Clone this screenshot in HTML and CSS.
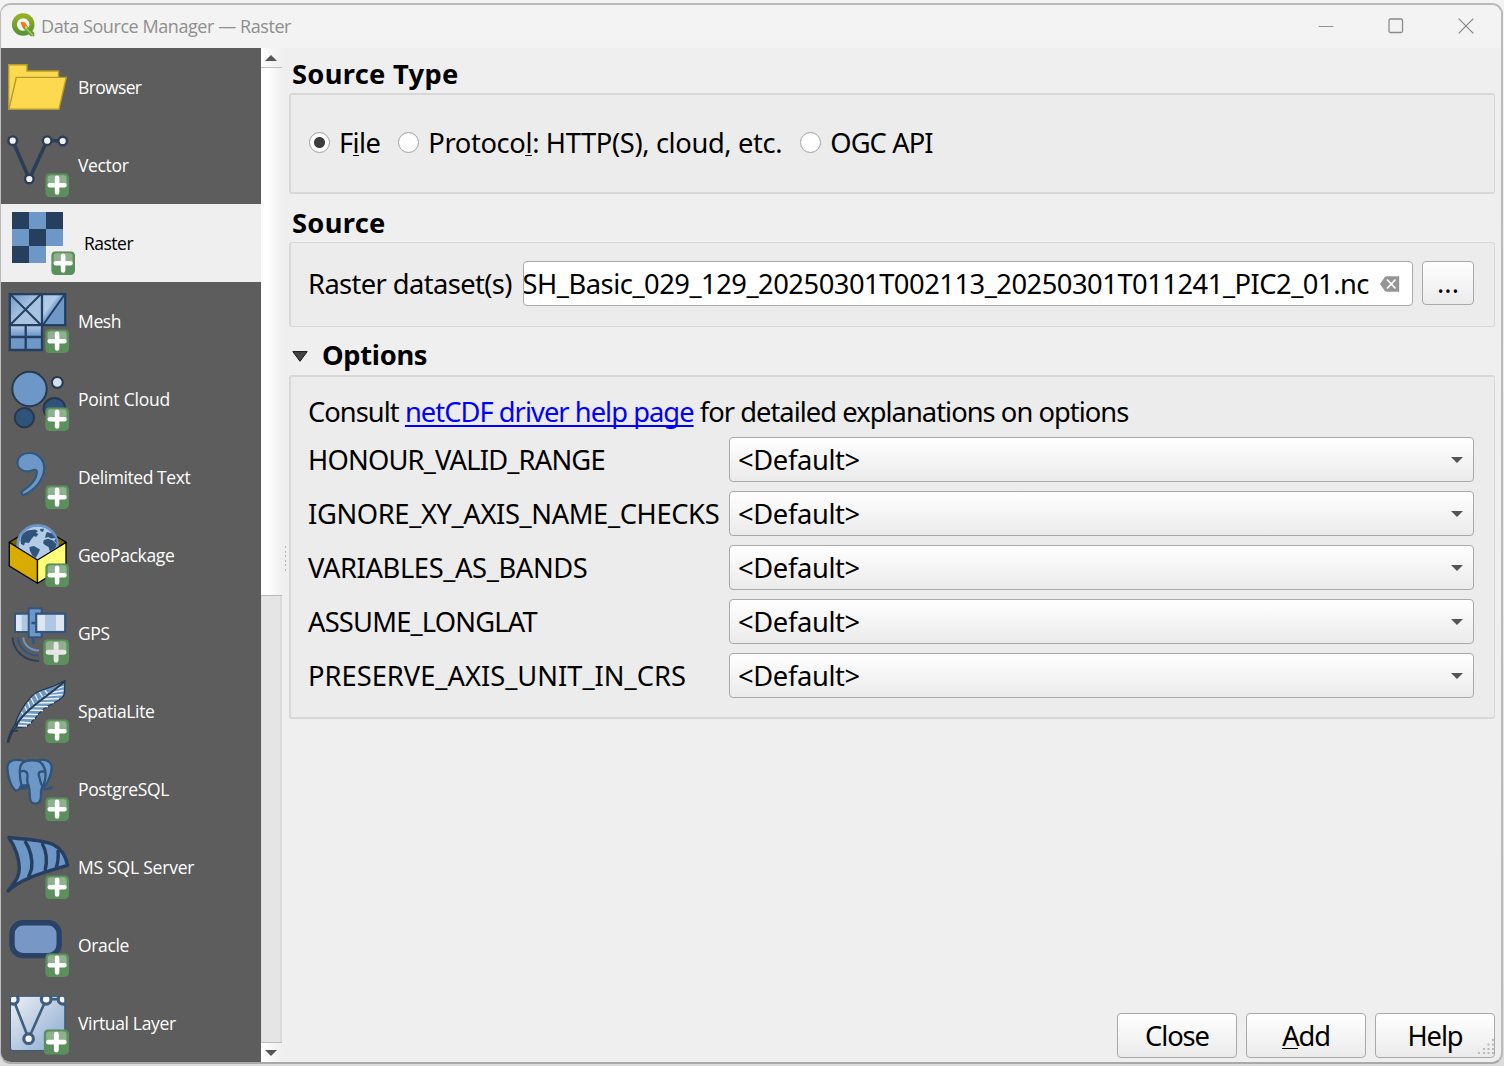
FILE: index.html
```html
<!DOCTYPE html>
<html lang="en">
<head>
<meta charset="utf-8">
<title>Data Source Manager — Raster</title>
<link rel="stylesheet" href="styles.css">
</head>
<body>
<svg class="defs" width="0" height="0" aria-hidden="true">
  <defs>
    <linearGradient id="mesh-a" x1="0" y1="0" x2="1" y2="1"><stop offset="0" stop-color="#6d97c6"/><stop offset=".5" stop-color="#a9c4e2"/><stop offset="1" stop-color="#a9c4e2"/></linearGradient>
    <linearGradient id="mesh-b" x1="0" y1="0" x2="1" y2="1"><stop offset="0" stop-color="#a9c8ec"/><stop offset=".35" stop-color="#b3cce8"/><stop offset=".5" stop-color="#6f98c8"/></linearGradient>
    <linearGradient id="mesh-c" x1="0" y1="0" x2="0" y2="1"><stop offset="0" stop-color="#b3cbe8"/><stop offset=".9" stop-color="#6f98c8"/></linearGradient>
    <linearGradient id="virt" x1="0" y1="0" x2="1" y2="1"><stop offset="0" stop-color="#eef0f4"/><stop offset="1" stop-color="#86a8d0"/></linearGradient>
    <linearGradient id="q" x1="0" y1="0" x2="0" y2="1"><stop offset="0" stop-color="#93b023"/><stop offset="1" stop-color="#589632"/></linearGradient>
    <clipPath id="virt-clip"><rect x="10.5" y="12.3" width="54.3" height="54.3" rx="2.5"/></clipPath>
    <symbol id="plus" viewBox="0 0 24 24">
      <rect width="24" height="24" rx="4.5" fill="#5b8f5b"/>
      <path d="M2.4 13V5A3 3 0 0 1 5.400 2H18.600A3 3 0 0 1 21.600 5V13Z" fill="#8fb18f"/>
      <path d="M12 4.700V19.500M4.600 12.100H19.400" stroke="currentColor" stroke-width="4.600" stroke-linecap="round"/>
    </symbol>
  </defs>
</svg>
<div class="window">
  <header class="titlebar">
    <svg class="logo" width="26" height="24" viewBox="0 0 26 24">
      <circle cx="12.200" cy="11.500" r="8.800" fill="none" stroke="url(#q)" stroke-width="5"/>
      <path d="M14.500 11.500L23.300 19.800V23.200H19.600L11.500 14.500Z" fill="#6aa038"/>
      <path d="M14 14.300L22 22.500" stroke="#a4c95c" stroke-width="1.300"/>
      <path d="M9.500 8.800L14.300 9.500L16.500 14L11.300 14.300Z" fill="#ee7913"/>
      <path d="M14 12.200L17 14.700L14.500 15.500Z" fill="#f3cf45"/>
    </svg>
    <h1 class="title">Data Source Manager — Raster</h1>
    <div class="controls">
      <svg width="16" height="18" viewBox="0 0 16 18"><path d="M.5 9.500H15.500" stroke="#929292"/></svg>
      <svg width="16" height="18" viewBox="0 0 16 18"><rect x="1" y="2" width="13.500" height="13.500" rx="1.500" fill="none" stroke="#8a8a8a" stroke-width="1.300"/></svg>
      <svg width="16" height="18" viewBox="0 0 16 18"><path d="M.7 1.700L15.300 16.300M15.300 1.700L.7 16.300" stroke="#858585" stroke-width="1.200"/></svg>
    </div>
  </header>
  <div class="body">
    <nav class="sidebar">
      <a class="item"><svg class="icon" viewBox="1 0 71 78">
        <path d="M8.700 61.300V16.800H27V23H58.500V61.300Z" fill="#fcd94f" stroke="#b59a2c" stroke-width="1.400"/>
        <path d="M16.300 29.400H66.300L58.900 61.300H8.900Z" fill="#fcd94f" stroke="#b59a2c" stroke-width="1.400"/>
      </svg><span class="name n-browser">Browser</span></a>
      <a class="item"><svg class="icon" viewBox="1 0 71 78">
        <path d="M12.700 14.700L29.300 53L47 14.700H62.700" fill="none" stroke="#2c3e56" stroke-width="3.600"/>
        <g fill="#f2f2f2" stroke="#2c3e56" stroke-width="2.400"><circle cx="12.700" cy="14.700" r="4.300"/><circle cx="47.200" cy="14.700" r="4.300"/><circle cx="62.700" cy="15" r="4.300"/><circle cx="29.300" cy="53" r="4.300"/></g>
        <use href="#plus" x="45.200" y="47.200" width="23.800" height="23.800"/>
      </svg><span class="name n-vector">Vector</span></a>
      <a class="item selected"><svg class="icon" viewBox="1 0 71 78">
        <path d="M6 8H57V42H40V59H6Z" fill="#6d97c6"/>
        <path d="M6 8H23V25H6ZM40 8H57V25H40ZM23 25H40V42H23ZM6 42H23V59H6Z" fill="#263f5f"/>
        <use href="#plus" x="45.200" y="47.200" width="23.800" height="23.800"/>
      </svg><span class="name n-raster">Raster</span></a>
      <a class="item"><svg class="icon" viewBox="1 0 71 78">
        <rect x="9.700" y="12" width="32.300" height="31.500" fill="url(#mesh-a)"/>
        <rect x="42" y="12" width="23" height="31.500" fill="url(#mesh-b)"/>
        <rect x="9.700" y="43.500" width="32.300" height="11.500" fill="url(#mesh-c)"/><rect x="9.700" y="55" width="32.300" height="13" fill="#6f98c8"/>
        <path d="M9.800 12.100H65.200V43.200H9.800ZM42 12V68H9.800V43M9.800 55H42M25.700 43V68" fill="none" stroke="#243f61" stroke-width="2.300"/>
        <path d="M10 12L41 43M41 12L10 43M65 12L43 43" stroke="#243f61" stroke-width="2"/>
        <use href="#plus" x="45.200" y="47.200" width="23.800" height="23.800"/>
      </svg><span class="name n-mesh">Mesh</span></a>
      <a class="item"><svg class="icon" viewBox="1 0 71 78">
        <g stroke="#27394f" stroke-width="2"><circle cx="29.500" cy="29" r="17.200" fill="#6d97c6"/><circle cx="57.300" cy="22.400" r="5.400" fill="#d5e0ee"/><circle cx="24.400" cy="57.700" r="9.600" fill="#2f5379"/><circle cx="54.400" cy="48.700" r="10.800" fill="#2f5379"/></g>
        <use href="#plus" x="45.200" y="47.200" width="23.800" height="23.800"/>
      </svg><span class="name n-point">Point Cloud</span></a>
      <a class="item"><svg class="icon" viewBox="1 0 71 78">
        <path d="M29.500 15C37.500 15 44.200 21 44.200 30C44.200 42 34 52.500 23.300 57.300L21 54C30 48.500 37 41 36.800 33.300C36.700 31.500 34.500 31.600 31 32.800C24 35 17.400 31 17.400 24.500C17.400 19 22.500 15 29.500 15Z" fill="#6d97c6" stroke="#31587f" stroke-width="2.200"/>
        <use href="#plus" x="45.200" y="47.200" width="23.800" height="23.800"/>
      </svg><span class="name n-text">Delimited Text</span></a>
      <a class="item"><svg class="icon" viewBox="1 0 71 78">
        <path d="M9.300 26.300L37.500 9L66 26.300L37.500 44Z" fill="#7d6200" stroke="#000" stroke-width="1.300"/>
        <circle cx="37.600" cy="29.400" r="20" fill="#b2cbe6" stroke="#6a94c7" stroke-width="2.600"/>
        <path d="M21 22C22 17 27 14 31 14L35 13.500L38 15L36 17L38.500 18L36 21L34 20L31 23.500L29 27L25 26.500L24 29.500L21 28L20.500 24ZM40 13L44 12.800L43 16L40.500 15ZM47 16L52 17.500L55.500 22L51 22.500L48 21L45 22L46 18ZM44 24L48 22.800L53 24.500L56.500 28L55.500 32L50 35.500L48.500 31L45 29L43 27ZM29.500 31L34 30L40 33.500L38 38L35.500 42L32 39L29.800 34.500ZM56 23L57 27L54 25ZM22 34L25 37L24 39Z" fill="#2f5379"/>
        <path d="M9.300 26.500L37.500 44V67.300L9.300 50Z" fill="#d7ab00" stroke="#000" stroke-width="1.300" stroke-linejoin="round"/>
        <path d="M66 26.500L37.500 44V67.300L66 50Z" fill="#ffff78" stroke="#000" stroke-width="1.300" stroke-linejoin="round"/>
        <use href="#plus" x="45.200" y="47.200" width="23.800" height="23.800"/>
      </svg><span class="name n-gpkg">GeoPackage</span></a>
      <a class="item gps"><svg class="icon" viewBox="1 0 71 78">
        <rect x="15" y="19.700" width="15" height="18.300" fill="#aec7e4" stroke="#31557e" stroke-width="2"/><path d="M16 21H21.700V37H16Z" fill="#dee6ef"/>
        <rect x="28.700" y="14.300" width="13" height="29" fill="#6d97c6" stroke="#31557e" stroke-width="2"/>
        <path d="M33.400 43V50M31.500 29H36" stroke="#31557e" stroke-width="2.600"/>
        <rect x="36.200" y="19.700" width="29" height="18.300" fill="#dee6ef" stroke="#31557e" stroke-width="2.200"/><path d="M45 21H56V37H45Z" fill="#aec7e4"/>
        <g fill="none" stroke-width="2"><path d="M12.500 43.500C13.500 57 24 67 39 67" stroke="#2f3f54"/><path d="M18 43.500C18.800 54 27 61.700 39 61.700" stroke="#31557e" stroke-width="2.200"/><path d="M23.200 43.500C24 51 30 56.600 39 56.600" stroke="#6d97c6"/></g>
        <use class="grey-plus" href="#plus" x="43.200" y="45.200" width="25.800" height="25.800"/>
      </svg><span class="name n-gps">GPS</span></a>
      <a class="item"><svg class="icon" viewBox="1 0 71 78">
        <path d="M14.500 56.500C15.500 47 22 34 32 24C39 16.500 49 17 56 13C60 11 62.500 10 65 8.800C64.300 13 65.300 19 64 23C62 27 58 28.500 54 31C46 34.500 39 40 35.500 46C32 49 30 53 26.500 54.500C22 56 18 54.500 14.500 56.500Z" fill="#6d97c6" stroke="#27394f" stroke-width="1.300"/>
        <path d="M20 50L31 51M18 53.500L27 54M22 46L35 46.500M25 42L38 42.700M28.500 38L43 38.500M32 34.500L48 34.700M36 31L54 30.500M40 27.500L59 26.500M44.500 24L62.500 22.500M49 21L63.500 18.500M54 17.700L63.700 14.500M21.500 40L23.500 43M25 34.500L27 39.500M28 30L30 35.500M31 26L34 32M35 22.500L38 28M39.500 20L42.500 25M45 18.500L47.500 21.500" stroke="#eef4fb" stroke-width="1.300"/>
        <path d="M15.500 54C26 36 46 26 64.500 9.500" fill="none" stroke="#27394f" stroke-width="2"/>
        <path d="M7.500 69.800C8.500 65 11 58.500 15 53L17.500 53C13 58.500 11.500 61.500 10.300 65L8.600 70.200Z" fill="#6d97c6" stroke="#27394f" stroke-width="1.500" stroke-linejoin="round"/><path d="M12 59L18 58.700" stroke="#27394f" stroke-width="1.600"/>
        <use href="#plus" x="45.200" y="47.200" width="23.800" height="23.800"/>
      </svg><span class="name n-spatia">SpatiaLite</span></a>
      <a class="item"><svg class="icon" viewBox="1 0 71 78">
        <g fill="#6d97c6" stroke="#2f5379" stroke-width="2.300" stroke-linejoin="round" stroke-linecap="round">
        <path d="M38 10.500C44 8.500 50 10.500 51.500 15.500C52.500 23 48 32 44.500 36.500L40 33Z"/>
        <path d="M24 11C17 9 9 9 7.500 16C6.800 24 10.500 36 15.500 40.700C17.500 41.300 19 38.500 21.500 37.500L25 37Z"/>
        <path d="M40.500 37.500C44 40 48 39 51.500 37.700" stroke-width="3"/>
        <path d="M20.500 37C21.500 39.500 25.500 38.500 28.500 36.500" stroke-width="3"/>
        <path d="M21.500 35.500C20 29 19 22 20.500 16C22.500 10.500 30 9.800 36 10.500C42 11.500 44.500 17 45.500 22C45.500 27 46 32 42 37.500L41 41C41 47 41.500 53.500 35.500 53.700C29.500 53.700 29.800 48 29.700 43C29.500 39 29 37 28.500 35.500Z"/>
        <path d="M20.800 21.500C24 20 27.500 21.500 27.500 25C27.500 29 26.500 33 28.500 35.500M45 22C41 20.500 38 22 38.800 25.500C40 28 40 33 42.500 36.500" fill="none"/></g>
        <use href="#plus" x="45.200" y="47.200" width="23.800" height="23.800"/>
      </svg><span class="name n-pg">PostgreSQL</span></a>
      <a class="item"><svg class="icon" viewBox="1 0 71 78">
        <path d="M8.800 9.500C26 11.500 44 12 53 16.500C62 21 66 29 67.500 37.300C49 43 23 49 8 63C15 53 19.300 50 19.300 40C19 27 14.500 18 8.800 9.500Z" fill="#6d97c6" stroke="#263f61" stroke-width="3.400" stroke-linejoin="round"/>
        <path d="M25 13C30 21 33 31 31.500 41L28.500 49M42 15C46.500 23 47.500 33 45 43M58 22C58.500 28 58.500 34 56 40" fill="none" stroke="#263f61" stroke-width="3.400"/>
        <use href="#plus" x="45.200" y="47.200" width="23.800" height="23.800"/>
      </svg><span class="name n-ms">MS SQL Server</span></a>
      <a class="item"><svg class="icon" viewBox="1 0 71 78">
        <rect x="12" y="16.800" width="47.200" height="32.800" rx="11" fill="#7797c6" stroke="#2a4365" stroke-width="5.400"/>
        <use href="#plus" x="45.200" y="47.200" width="23.800" height="23.800"/>
      </svg><span class="name n-oracle">Oracle</span></a>
      <a class="item"><svg class="icon" viewBox="1 0 71 78">
        <rect x="10.500" y="12.300" width="54.300" height="54.300" rx="2.500" fill="url(#virt)"/>
        <g clip-path="url(#virt-clip)"><path d="M13.300 15.300L28.600 54.700L46.200 15.300H62.500" fill="none" stroke="#3f5e80" stroke-width="2.600"/>
        <g fill="#f7f7f7" stroke="#3f5e80" stroke-width="3.200"><circle cx="13.300" cy="15.300" r="4.800"/><circle cx="46.200" cy="15.300" r="4.800"/><circle cx="63" cy="15.300" r="4.800"/><circle cx="28.600" cy="54.700" r="4.800"/></g></g>
        <rect x="10.500" y="12.300" width="54.300" height="54.300" rx="2.500" fill="none" stroke="#31557e"/>
        <use href="#plus" x="43.600" y="45.300" width="25.500" height="25.500"/>
      </svg><span class="name n-virtual">Virtual Layer</span></a>
    </nav>
    <div class="scrollbar">
      <div class="scroll-btn up"><svg width="12" height="6" viewBox="0 0 12 6"><path d="M0 6L6 0L12 6Z" fill="#555"/></svg></div>
      <div class="thumb"></div>
      <div class="track"></div>
      <div class="scroll-btn down"><svg width="12" height="6" viewBox="0 0 12 6"><path d="M0 0L6 6L12 0Z" fill="#555"/></svg></div>
    </div>
    <main class="panel">
      <div class="grip"></div>
      <h2 class="heading first"><span class="h-type">Source Type</span></h2>
      <section class="group types">
        <label class="radio"><i class="dot on"></i><span class="t-file">F<u>i</u>le</span></label>
        <label class="radio"><i class="dot"></i><span class="t-proto">Protoco<u>l</u>: HTTP(S), cloud, etc.</span></label>
        <label class="radio"><i class="dot"></i><span class="t-ogc">OGC API</span></label>
      </section>
      <h2 class="heading"><span class="h-source">Source</span></h2>
      <section class="group source">
        <span class="field-label">Raster dataset(s)</span>
        <div class="input"><div class="clip"><span class="t-path">SH_Basic_029_129_20250301T002113_20250301T011241_PIC2_01.nc</span></div>
          <svg width="20" height="16" viewBox="0 0 20 16"><path d="M0 8L4.500 1.500Q5.500 .3 7 .3H19.200V15.700H7Q5.500 15.700 4.500 14.500Z" fill="#959595"/><path d="M7 3.500L15.500 12.500M15.500 3.500L7 12.500" stroke="#fff" stroke-width="1.700"/></svg>
        </div>
        <button class="btn browse">...</button>
      </section>
      <h2 class="heading"><svg class="tri" width="16" height="11" viewBox="0 0 16 11"><path d="M.8 .6H15.200L8 10.300Z" fill="#444" stroke="#161616"/></svg><span class="h-options">Options</span></h2>
      <section class="group options">
        <p class="help">Consult <a class="link">netCDF driver help page</a> for detailed explanations on options</p>
        <div class="form">
          <span class="o1">HONOUR_VALID_RANGE</span><div class="select"><span>&lt;Default&gt;</span><i class="arrow"></i></div>
          <span class="o2">IGNORE_XY_AXIS_NAME_CHECKS</span><div class="select"><span>&lt;Default&gt;</span><i class="arrow"></i></div>
          <span class="o3">VARIABLES_AS_BANDS</span><div class="select"><span>&lt;Default&gt;</span><i class="arrow"></i></div>
          <span class="o4">ASSUME_LONGLAT</span><div class="select"><span>&lt;Default&gt;</span><i class="arrow"></i></div>
          <span class="o5">PRESERVE_AXIS_UNIT_IN_CRS</span><div class="select"><span>&lt;Default&gt;</span><i class="arrow"></i></div>
        </div>
      </section>
      <footer class="actions">
        <button class="btn">Close</button>
        <button class="btn"><u>A</u>dd</button>
        <button class="btn">Help</button>
      </footer>
      <svg class="sizegrip" width="16" height="15" viewBox="0 0 16 15"><path d="M14 0h2v2h-2zM9.500 4.500h2v2h-2zM14 4.500h2v2h-2zM5 9h2v2h-2zM9.500 9h2v2h-2zM14 9h2v2h-2zM0 13h2v2h-2zM5 13h2v2h-2zM9.500 13h2v2h-2zM14 13h2v2h-2z" fill="#b9b9b9"/></svg>
    </main>
  </div>
</div>
</body>
</html>
```
FILE: styles.css
```css
* { box-sizing: border-box; }
html, body { height: 100%; }
body {
  margin: 0;
  padding: 3px 1px 1px 0;
  background: linear-gradient(#f3f3f3, #dcdcdc);
  font: 27.3px/1.3 "Noto Sans", sans-serif;
  color: #000;
  overflow: hidden;
}
.defs { position: absolute; }
.window {
  display: flex;
  flex-direction: column;
  height: 1061px;
  border: 2px solid #bababa;
  border-left: 1px solid #bababa;
  border-bottom-color: #a9a9a9;
  border-radius: 11px;
  background: #efefef;
  overflow: hidden;
}
.titlebar {
  flex: none;
  height: 43px;
  display: flex;
  align-items: center;
  padding: 0 27px 2px 10px;
  background: #f3f3f3;
}
.logo { flex: none; margin-top: -1px; }
.title {
  flex: 1;
  margin: 0 0 0 4px;
  font: 400 18px/24px "Open Sans", sans-serif;
  letter-spacing: -.43px;
  color: #8f8f8f;
  white-space: nowrap;
}
.controls { display: flex; gap: 54px; }
.body { flex: 1; min-height: 0; display: flex; }

.sidebar { width: 260px; background: #5d5d5d; overflow: hidden; }
.item {
  display: flex;
  align-items: center;
  height: 78px;
  color: #fff;
  font: 400 17.5px/24px "Open Sans", sans-serif;
}
.icon { flex: none; width: 71px; height: 78px; color: #fff; }
.name { margin-left: 6px; letter-spacing: -.35px; white-space: nowrap; }
.n-browser { letter-spacing: -.65px; }
.n-raster { letter-spacing: -.5px; }
.n-point { letter-spacing: -.22px; }
.n-text { letter-spacing: -.42px; }
.n-ms { letter-spacing: -.22px; }
.item.selected { padding-left: 6px; background: #efefef; color: #000; }
.grey-plus { color: #e6e6e6; }

.scrollbar {
  width: 21px;
  display: flex;
  flex-direction: column;
  background: #e5e5e5;
}
.scroll-btn {
  flex: none;
  height: 20px;
  padding-right: 2px;
  display: flex;
  align-items: center;
  justify-content: center;
  background: linear-gradient(90deg, #fff, #efefef);
  border-bottom: 1px solid #bdbdbd;
}
.scroll-btn.down { border-bottom: 0; border-top: 1px solid #bdbdbd; }
.thumb { height: 528px; background: linear-gradient(90deg, #fff 30%, #efefef); border-bottom: 1px solid #b8b8b8; }
.track { flex: 1; border-left: 1px solid #dadada; border-right: 2px solid #dadada; }

.panel {
  flex: 1;
  min-width: 0;
  position: relative;
  display: flex;
  flex-direction: column;
  padding: 0 6px 4px 7px;
}
.grip {
  position: absolute;
  left: 3px;
  top: 498px;
  width: 1px;
  height: 25px;
  background: repeating-linear-gradient(#b5b5b5 0 2px, transparent 2px 4.6px);
}
.heading {
  flex: none;
  height: 48px;
  margin: 0;
  padding: 0 3px 1px;
  display: flex;
  align-items: flex-end;
  font-size: 27.3px;
  line-height: 36px;
  font-weight: 700;
  white-space: nowrap;
}
.heading.first { height: 45px; }
.h-type, .h-source { letter-spacing: .3px; }
.h-options { letter-spacing: -.3px; padding-bottom: 1px; }
.tri { margin: 0 14px 12px 0; }
.group {
  flex: none;
  display: flex;
  border: 2px solid #d8d8d8;
  border-right-width: 1px;
  border-radius: 3px;
  background: #ececec;
  white-space: nowrap;
}
.types { height: 101px; align-items: center; padding: 0 0 2px 18px; gap: 18px; }
.radio { display: flex; align-items: center; gap: 9px; }
.t-file { letter-spacing: -.6px; }
.t-proto { letter-spacing: -.37px; }
.t-ogc { letter-spacing: -.9px; }
.dot {
  width: 21px;
  height: 21px;
  border: 1.5px solid #a2a2a2;
  border-radius: 50%;
  background: #fff;
}
.dot.on { background: radial-gradient(circle, #3c3c3c 0 5px, #fff 6px); }
u { text-decoration: none; border-bottom: 1px solid #000; display: inline-block; line-height: 25px; }
.source { height: 85px; align-items: flex-start; padding: 17px 20px 0 17px; border-width: 1px 1px 1px 2px; }
.field-label { width: 215px; line-height: 47px; letter-spacing: -.6px; }
.input {
  width: 890px;
  height: 45px;
  margin: 1px 9px 0 0;
  display: flex;
  align-items: center;
  padding-right: 12px;
  border: 1.5px solid #aaa;
  border-radius: 4px;
  background: #fff;
}
.clip { flex: 1; min-width: 0; overflow: hidden; display: flex; justify-content: flex-end; margin-right: 11px; }
.t-path { letter-spacing: -.48px; }
.btn {
  width: 120px;
  height: 45px;
  padding: 0;
  border: 1px solid #a9a9a9;
  border-radius: 4px;
  background: linear-gradient(#fff, #ebebeb);
  font: inherit;
  letter-spacing: -1.1px;
  color: #000;
}
.browse { width: 52px; height: 44px; margin-top: 1px; letter-spacing: 0; }
.options { height: 344px; flex-direction: column; padding: 16px 20px 0 17px; }
.help { margin: 0; height: 44px; line-height: 38px; letter-spacing: -.96px; }
.link { color: #00f; text-decoration: underline; text-decoration-thickness: 2px; text-underline-offset: 3px; text-decoration-skip-ink: none; }
.form { display: grid; grid-template-columns: 421px 1fr; row-gap: 9px; align-items: center; }
.o1, .o4 { letter-spacing: -.8px; }
.o2, .o3 { letter-spacing: -.37px; }
.select {
  height: 45px;
  display: flex;
  align-items: center;
  justify-content: space-between;
  padding: 0 10px 0 8px;
  border: 1px solid #a9a9a9;
  border-radius: 4px;
  background: linear-gradient(#fff, #ebebeb);
  letter-spacing: -.35px;
}
.arrow { border: 6px solid transparent; border-top-color: #555; border-bottom: 0; }
.actions { margin-top: auto; display: flex; justify-content: flex-end; gap: 9px; }
.sizegrip { position: absolute; right: 7px; bottom: 8px; }
```
